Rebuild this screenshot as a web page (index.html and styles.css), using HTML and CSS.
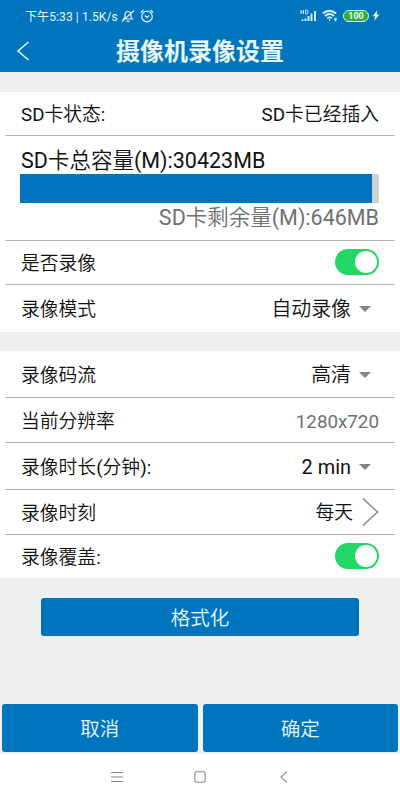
FILE: index.html
```html
<!DOCTYPE html>
<html lang="zh-CN">
<head>
<meta charset="utf-8">
<title>摄像机录像设置</title>
<link rel="stylesheet" href="styles.css">
</head>
<body>
<div class="screen">
  <header class="top">
    <div class="status">
      <span class="status-text">下午5:33 | 1.5K/s</span>
      <svg class="bell" width="14" height="14" viewBox="0 0 14 14"><path d="M2.500 10h9L10 8V5.500a3 3 0 0 0-6 0V8zM5.500 12.300h3M1 12.500 13 1.500"/></svg>
      <svg class="alarm" width="14" height="14" viewBox="0 0 14 14"><circle cx="7" cy="7.500" r="5.300"/><path d="M.8 3.500 3.500 1M13.200 3.500 10.500 1M4.800 6.500 7 8.500l2.200-2"/></svg>
      <svg class="signal" width="17" height="13" viewBox="0 0 17 13"><path d="M1 1v4M3.500 1v4M1 3h2.500M5.500 1v4h1q1.500 0 1.500-2T6.500 1z" stroke-width=".9"/><path d="M2.500 12v-1.500M5.500 12V9.500M8.500 12V7M11.500 12V4.500M15 12V2" stroke-width="1.900"/></svg>
      <svg class="wifi" width="16" height="13" viewBox="0 0 16 13"><path d="M.8 4.500q6.500-5.500 13.400 0M3 7q4.500-4 9 0M5.200 9.300q2.300-2 4.600 0" stroke-width="1.700"/><path d="M7.500 10.200v2M12.500 10.500h2q0-1.500-1-1.500t-1 1.500 1.800 1.300" stroke-width="1"/></svg>
      <span class="battery">100</span>
      <svg class="bolt" width="8" height="11" viewBox="0 0 8 11"><path d="M5.500 0 .5 6.200h2.800L2 11l5.500-6.500H4.600z"/></svg>
    </div>
    <div class="title-bar">
      <svg class="back" width="14" height="20" viewBox="0 0 14 20"><path d="M12.500 1 2 10l10.500 9"/></svg>
      <h1>摄像机录像设置</h1>
    </div>
  </header>

  <main>
    <section class="card">
      <div class="row r-state"><span><b>SD</b>卡状态<b>:</b></span><span><b>SD</b>卡已经插入</span></div>
      <div class="row storage">
        <div class="total"><b>SD</b>卡总容量<b>(M):30423MB</b></div>
        <div class="meter"><div class="used"></div></div>
        <div class="free"><b>SD</b>卡剩余量<b>(M):646MB</b></div>
      </div>
      <div class="row r-record"><span>是否录像</span><span class="toggle"></span></div>
      <div class="row r-mode"><span>录像模式</span><span class="select">自动录像</span></div>
    </section>
    <section class="card">
      <div class="row r-stream"><span>录像码流</span><span class="select">高清</span></div>
      <div class="row r-res"><span>当前分辨率</span><span class="muted"><b>1280x720</b></span></div>
      <div class="row r-length"><span>录像时长<b>(</b>分钟<b>):</b></span><span class="select"><b>2 min</b></span></div>
      <div class="row r-time"><span>录像时刻</span><span class="link"><span>每天</span><svg width="17" height="30" viewBox="0 0 17 30"><path d="M1 1.500 15.500 15 1 28.500"/></svg></span></div>
      <div class="row r-cover"><span>录像覆盖<b>:</b></span><span class="toggle"></span></div>
    </section>
    <button class="btn format">格式化</button>
  </main>

  <footer class="actions">
    <button class="btn">取消</button>
    <button class="btn">确定</button>
  </footer>
  <nav class="sysnav">
    <svg width="12" height="12" viewBox="0 0 12 12"><path d="M0 1.500h12M0 6h12M0 10.500h12"/></svg>
    <svg width="12" height="12" viewBox="0 0 12 12"><rect x=".8" y=".8" width="10.400" height="10.400" rx="2.500"/></svg>
    <svg width="12" height="12" viewBox="0 0 12 12"><path d="M10 .7 4 6l6 5.300"/></svg>
  </nav>
</div>
</body>
</html>
```
FILE: styles.css
```css
* { box-sizing: border-box; }

body {
  margin: 0;
  background: #efefef;
  color: #111;
  font-family: Roboto, "Noto Sans CJK SC", sans-serif;
  font-size: 18.8px;
  font-weight: 350;
}

/* Latin runs are set one step heavier than the Chinese text */
b { font-weight: 400; }

svg { display: block; fill: none; flex: none; }

.screen {
  width: 400px;
  height: 800px;
  display: flex;
  flex-direction: column;
  overflow: hidden;
}

.top { height: 72px; background: #0075be; color: #e6faff; }

.status {
  height: 31px;
  padding: 0 20px 0 25px;
  display: flex;
  align-items: center;
  font-size: 12px;
  font-weight: 400;
}
.status svg { stroke: #d8f4ff; }
.status-text { width: 94px; white-space: nowrap; letter-spacing: .1px; }
.bell { margin-left: 2px; stroke-width: 1.200; }
.alarm { margin-left: 5px; stroke-width: 1.200; }
.signal { margin-left: auto; }
.wifi { margin-left: 5px; }

.battery {
  width: 26px;
  height: 12px;
  margin-left: 5px;
  border: 1px solid #d5f5e8;
  border-radius: 6px;
  background: #35ad3c;
  font-size: 9px;
  font-weight: 700;
  line-height: 10px;
  text-align: center;
}

.status .bolt { margin-left: 3px; fill: #e6faff; stroke: none; }

.title-bar {
  height: 41px;
  padding: 0 16px;
  display: grid;
  grid-template-columns: 14px 1fr 14px;
  align-items: center;
}
.back { stroke: #e6faff; stroke-width: 1.500; margin-top: -2px; }
h1 { margin: 0; padding-top: 1px; font-size: 24px; line-height: 40px; font-weight: 700; text-align: center; }

main { flex: 1; display: flex; flex-direction: column; }

.card { background: #fff; margin-top: 20px; padding: 0 5px; }
.card + .card { margin-top: 19px; }

.row {
  display: flex;
  align-items: center;
  justify-content: space-between;
  padding: 0 16px;
  border-bottom: 1px solid #b4b4b4;
  line-height: 24px;
}
.row:last-child { border-bottom: 0; }
.row > span:not(.toggle, .link) { padding-top: 3px; }

.r-state { height: 44px; }
.r-record { height: 44px; }
.r-mode { height: 47px; }
.r-stream { height: 47px; }
.r-res { height: 45px; }
.r-length { height: 47px; }
.r-time { height: 45px; }
.r-cover { height: 43px; }
.r-record .toggle, .r-cover .toggle { margin-bottom: 1px; }

.storage {
  height: 105px;
  flex-direction: column;
  align-items: stretch;
  justify-content: flex-start;
  padding: 11px 16px 0 15px;
  font-size: 21.500px;
}
.total { line-height: 27px; padding-left: 1px; }
.meter { height: 29px; background: #d0d0d0; }
.used { width: 98%; height: 100%; background: #0075be; }
.free { line-height: 29px; text-align: right; color: #707070; }

.toggle {
  width: 44px;
  height: 26px;
  padding: 2px;
  border-radius: 13px;
  background: #23d766;
  display: flex;
  justify-content: flex-end;
}
.toggle::after { content: ""; width: 22px; height: 22px; border-radius: 50%; background: #fff; }

.select { display: flex; align-items: center; font-size: 19.900px; padding-right: 8px; }
.select::after {
  content: "";
  margin: -2px 0 0 8px;
  border: 6px solid transparent;
  border-top-color: #858585;
  border-bottom: 0;
}
.row > .muted { color: #707070; }
.link { display: flex; align-items: center; gap: 9px; }
.link span { padding-top: 2px; }
.link svg { stroke: #888; stroke-width: 1.500; }

.btn {
  margin: 0;
  padding: 0;
  border: 0;
  border-radius: 3px;
  background: #0075be;
  color: #e6faff;
  font: inherit;
  font-size: 19.500px;
}
.format { width: 318px; height: 38px; margin: 20px auto 0; padding-bottom: 2px; }

.actions {
  height: 50px;
  padding: 0 2px 2px;
  display: grid;
  grid-template-columns: 1fr 1fr;
  gap: 5px;
}
.actions .btn { padding-bottom: 1px; }

.sysnav {
  height: 46px;
  background: #fff;
  display: flex;
  justify-content: center;
  align-items: center;
  gap: 71px;
}
.sysnav svg { stroke: #888; stroke-width: 1.100; }
```
